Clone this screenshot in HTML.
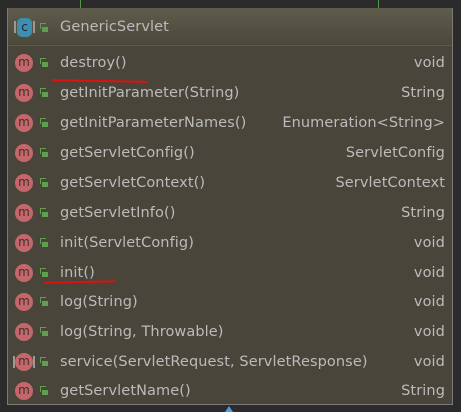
<!DOCTYPE html><html><head><style>
body{margin:0;width:461px;height:412px;background:#2b2b2b;position:relative;overflow:hidden;font-family:"DejaVu Sans","Liberation Sans",sans-serif;font-size:14.5px;letter-spacing:0.1px;color:#bbbbbb}
.box{position:absolute;left:7px;top:8px;width:444px;height:396px;background:#49453a;border:1px solid #7a7a7a;border-top:none}
.hdr{height:37px;background:linear-gradient(#5f5b4d,#4b4739);border-bottom:1px solid #5a5a55;position:relative}
.row{position:absolute;left:0;right:0;height:30px}
.m{position:absolute;left:7px;top:8px;width:18px;height:18px;border-radius:50%;background:#c3676b;color:#40302e;font-size:12px;letter-spacing:0;line-height:17px;text-align:center}
.lk{position:absolute;left:32px;top:12px;width:5px;height:5px;border-left:1.5px solid #5fa04e;border-top:1.5px solid #5fa04e}
.lk:after{content:"";position:absolute;left:1px;top:3px;width:6px;height:5px;background:#5fa04e}
.n{position:absolute;left:52px;top:9px}
.t{position:absolute;right:7px;top:9px}
.g{position:absolute;top:0;width:1px;height:8px;background:#4f9a45}
.u{position:absolute;height:2px;background:#e01010;border-radius:1px}
</style></head><body>
<div class="g" style="left:80px"></div><div class="g" style="left:378px"></div>
<div class="box">
<div class="hdr">
<div style="position:absolute;left:6px;top:13px;width:2px;height:12px;background:#999"></div><div style="position:absolute;left:25px;top:13px;width:2px;height:12px;background:#999"></div>
<div style="position:absolute;left:9px;top:10px;width:15px;height:19px;border-radius:5px;background:#3d8fb0;color:#223;font-size:12px;text-align:center;line-height:19px;letter-spacing:0">c</div>
<div class="lk" style="top:15px"></div>
<div class="n" style="top:11px">GenericServlet</div>
</div>
<div class="row" style="top:38px"><div class="m">m</div><div class="lk"></div><div class="n">destroy()</div><div class="t">void</div></div>
<div class="row" style="top:68px"><div class="m">m</div><div class="lk"></div><div class="n">getInitParameter(String)</div><div class="t">String</div></div>
<div class="row" style="top:98px"><div class="m">m</div><div class="lk"></div><div class="n">getInitParameterNames()</div><div class="t">Enumeration&lt;String&gt;</div></div>
<div class="row" style="top:128px"><div class="m">m</div><div class="lk"></div><div class="n">getServletConfig()</div><div class="t">ServletConfig</div></div>
<div class="row" style="top:158px"><div class="m">m</div><div class="lk"></div><div class="n">getServletContext()</div><div class="t">ServletContext</div></div>
<div class="row" style="top:188px"><div class="m">m</div><div class="lk"></div><div class="n">getServletInfo()</div><div class="t">String</div></div>
<div class="row" style="top:218px"><div class="m">m</div><div class="lk"></div><div class="n">init(ServletConfig)</div><div class="t">void</div></div>
<div class="row" style="top:248px"><div class="m">m</div><div class="lk"></div><div class="n">init()</div><div class="t">void</div></div>
<div class="row" style="top:277px"><div class="m">m</div><div class="lk"></div><div class="n">log(String)</div><div class="t">void</div></div>
<div class="row" style="top:307px"><div class="m">m</div><div class="lk"></div><div class="n">log(String, Throwable)</div><div class="t">void</div></div>
<div class="row" style="top:337px"><div style="position:absolute;left:5px;top:11px;width:2px;height:12px;background:#999"></div><div style="position:absolute;left:25px;top:11px;width:2px;height:12px;background:#999"></div><div class="m">m</div><div class="lk"></div><div class="n">service(ServletRequest, ServletResponse)</div><div class="t">void</div></div>
<div class="row" style="top:366px"><div class="m">m</div><div class="lk"></div><div class="n">getServletName()</div><div class="t">String</div></div>
</div>
<div class="u" style="left:51px;top:80px;width:97px;transform:rotate(1deg)"></div>
<div class="u" style="left:44px;top:281px;width:72px;transform:rotate(-1deg)"></div>
<div style="position:absolute;left:225px;top:406px;border:4px solid transparent;border-bottom:6px solid #4a9ee0;border-top:none"></div>
</body></html>
